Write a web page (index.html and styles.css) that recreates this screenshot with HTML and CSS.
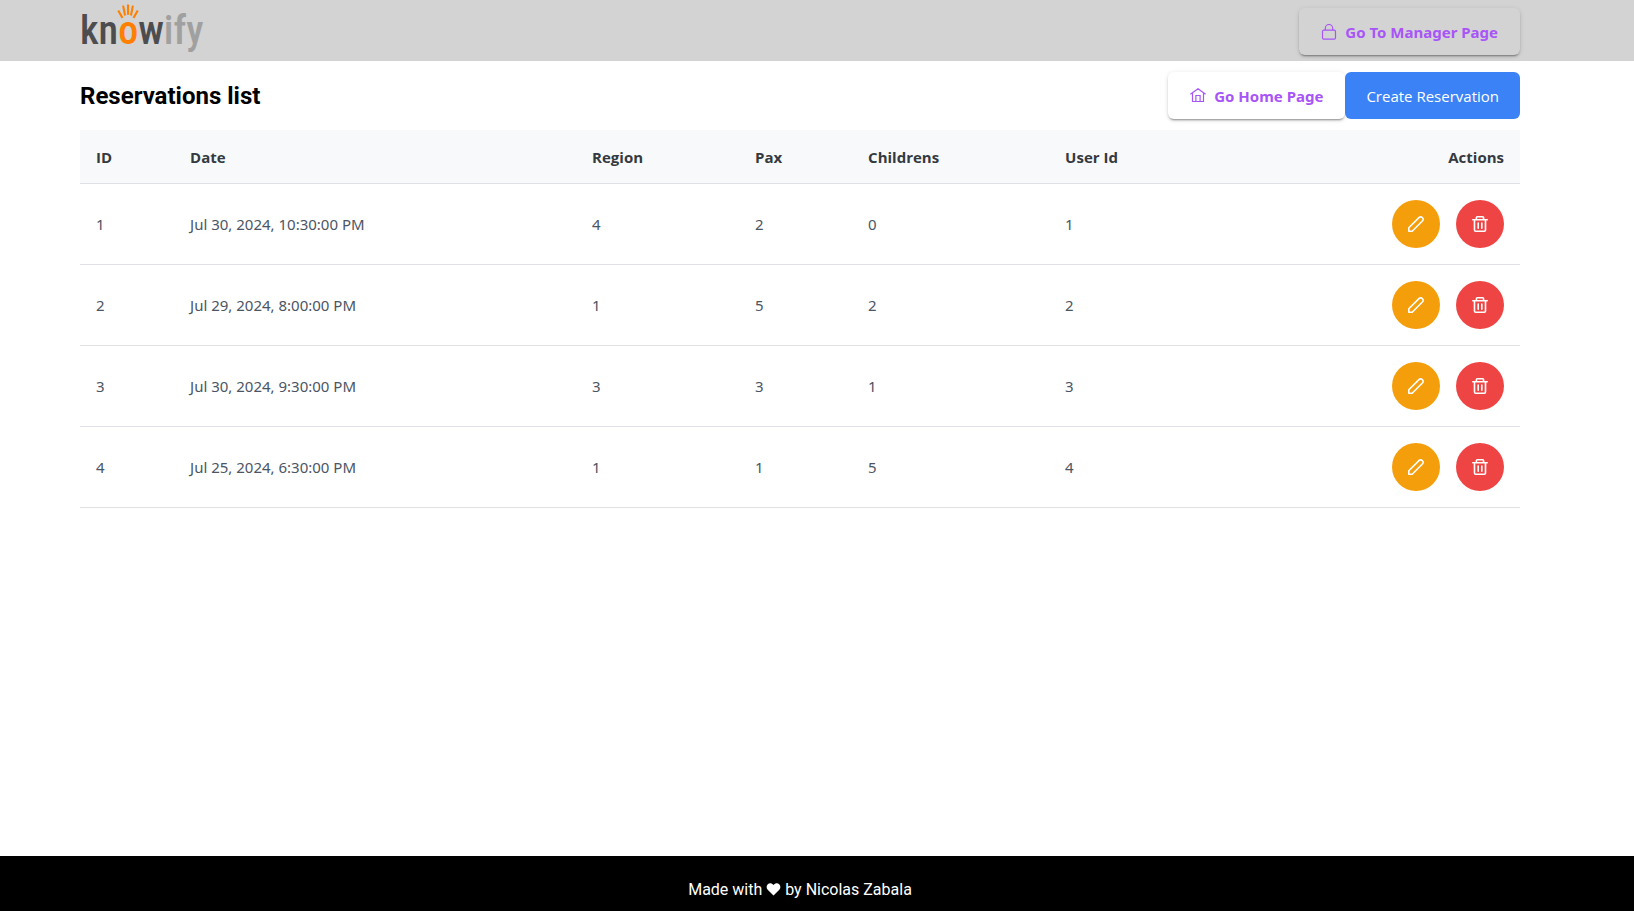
FILE: index.html
```html
<!DOCTYPE html>
<html lang="en">
<head>
<meta charset="utf-8">
<title>Reservations list</title>
<link rel="stylesheet" href="styles.css">
</head>
<body>
<svg class="sprite" aria-hidden="true">
  <symbol id="pencil" viewBox="0 0 16 16">
    <path d="M.8 15.200v-3.400L11.200 1.400q1.400-1.200 2.800 0l.6.6q1.200 1.400 0 2.800L4.200 15.200Z" fill="none" stroke="currentColor" stroke-width="1.600" stroke-linejoin="round"/>
  </symbol>
  <symbol id="trash" viewBox="0 0 16 16">
    <path d="M.8 3.700h14.400M4.400 3.700V1.700q0-.9.9-.9h5.400q.9 0 .9.9v2M2.500 3.700v10.400q0 1.100 1.100 1.100h8.800q1.100 0 1.100-1.100V3.700M6.200 7v5.200M9.800 7v5.200" fill="none" stroke="currentColor" stroke-width="1.600" stroke-linecap="round" stroke-linejoin="round"/>
  </symbol>
</svg>
<header class="topbar">
  <div class="container topbar-row">
    <a class="logo" href="#" aria-label="knowify">
      <span class="logo-dark">kn</span><span class="logo-o">o<svg class="rays" viewBox="0 0 18 14" aria-hidden="true"><path d="M1 5l3.500 6M5 1l1.600 8M9 0v8.500M13 1l-1.600 8M17 5l-3.500 6" fill="none" stroke="currentColor" stroke-width="1.700"/></svg></span><span class="logo-dark">w</span><span class="logo-light">ify</span>
    </a>
    <button class="btn btn-raised" type="button">
      <svg class="icon" viewBox="0 0 16 16" aria-hidden="true"><rect x="1.500" y="6.200" width="13" height="9" rx="1.200" fill="none" stroke="currentColor" stroke-width="1.200"/><path d="M4.300 6.200V4.200a3.700 3.700 0 0 1 7.400 0v2" fill="none" stroke="currentColor" stroke-width="1.200"/></svg>
      Go To Manager Page
    </button>
  </div>
</header>
<main class="container content">
  <div class="title-row">
    <h1 class="title">Reservations list</h1>
    <div class="title-actions">
      <button class="btn btn-raised" type="button">
        <svg class="icon" viewBox="0 0 16 16" aria-hidden="true"><path d="M.4 6.300 8 .8l7.600 5.500M2.500 4.800v8.700h11V4.800M5.900 13.500v-6h4.200v6" fill="none" stroke="currentColor" stroke-width="1.200"/></svg>
        Go Home Page
      </button>
      <button class="btn btn-primary" type="button">Create Reservation</button>
    </div>
  </div>
  <table class="table">
    <colgroup><col class="c-id"><col class="c-date"><col class="c-region"><col class="c-pax"><col class="c-children"><col class="c-user"><col></colgroup>
    <thead>
      <tr><th>ID</th><th>Date</th><th>Region</th><th>Pax</th><th>Childrens</th><th>User Id</th><th class="right">Actions</th></tr>
    </thead>
    <tbody>
      <tr><td>1</td><td>Jul 30, 2024, 10:30:00 PM</td><td>4</td><td>2</td><td>0</td><td>1</td><td><div class="actions"><button class="round edit" type="button" aria-label="Edit"><svg class="icon"><use href="#pencil"/></svg></button><button class="round delete" type="button" aria-label="Delete"><svg class="icon"><use href="#trash"/></svg></button></div></td></tr>
      <tr><td>2</td><td>Jul 29, 2024, 8:00:00 PM</td><td>1</td><td>5</td><td>2</td><td>2</td><td><div class="actions"><button class="round edit" type="button" aria-label="Edit"><svg class="icon"><use href="#pencil"/></svg></button><button class="round delete" type="button" aria-label="Delete"><svg class="icon"><use href="#trash"/></svg></button></div></td></tr>
      <tr><td>3</td><td>Jul 30, 2024, 9:30:00 PM</td><td>3</td><td>3</td><td>1</td><td>3</td><td><div class="actions"><button class="round edit" type="button" aria-label="Edit"><svg class="icon"><use href="#pencil"/></svg></button><button class="round delete" type="button" aria-label="Delete"><svg class="icon"><use href="#trash"/></svg></button></div></td></tr>
      <tr><td>4</td><td>Jul 25, 2024, 6:30:00 PM</td><td>1</td><td>1</td><td>5</td><td>4</td><td><div class="actions"><button class="round edit" type="button" aria-label="Edit"><svg class="icon"><use href="#pencil"/></svg></button><button class="round delete" type="button" aria-label="Delete"><svg class="icon"><use href="#trash"/></svg></button></div></td></tr>
    </tbody>
  </table>
</main>
<footer class="footer">
  <p class="container credit">Made with <svg class="heart" viewBox="0 0 14 13" aria-hidden="true"><path d="M7 12.500 1.200 6.700C-.3 5.100-.2 2.600 1.300 1.200 2.900-.2 5.300 0 7 2 8.700 0 11.100-.2 12.700 1.200c1.500 1.400 1.600 3.900.1 5.500Z" fill="currentColor"/></svg> by Nicolas Zabala</p>
</footer>
</body>
</html>
```
FILE: styles.css
```css
* { box-sizing: border-box; }
body {
  margin: 0;
  min-height: 100vh;
  display: flex;
  flex-direction: column;
  background: #fff;
  font-family: "Open Sans", "Noto Sans", sans-serif;
  font-size: 15px;
}
.sprite { display: none; }
.container {
  width: 100%;
  max-width: 1600px;
  padding: 0 80px;
}
.topbar { background: #d3d3d3; }
.topbar-row {
  display: flex;
  justify-content: space-between;
  align-items: flex-start;
}
.topbar .btn { margin-top: 8px; }
.logo {
  display: flex;
  font: 500 40px/61px "Roboto Condensed", Lato, sans-serif;
  text-decoration: none;
}
.logo-dark { color: #4d4d4f; }
.logo-light { color: #a0a0a0; }
.logo-o { position: relative; color: #ff7f00; }
.rays {
  position: absolute;
  top: 3px;
  left: 50%;
  margin-left: -11px;
  width: 22px;
  height: 20px;
}
.icon { width: 16px; height: 16px; display: block; }
.btn {
  display: flex;
  align-items: center;
  gap: 8px;
  height: 47px;
  padding: 0 21px;
  border: 0;
  border-radius: 6px;
  font-family: inherit;
  font-size: 15px;
  cursor: pointer;
}
.btn-raised {
  padding: 0 22px;
  background: transparent;
  color: #a855f7;
  font-family: "Noto Sans", "Open Sans", sans-serif;
  font-weight: 700;
  box-shadow: 0 3px 1px -2px rgba(0, 0, 0, .2), 0 2px 2px rgba(0, 0, 0, .14), 0 1px 5px rgba(0, 0, 0, .12);
}
.title-actions .btn-raised { background: #fff; }
.btn-primary { background: #3b82f6; color: #fff; }
.content { flex: 1; }
.title-row {
  display: flex;
  justify-content: space-between;
  align-items: center;
  padding: 11px 0;
}
.title {
  margin: 0;
  font: 700 24px/28px Roboto, sans-serif;
  color: #000;
}
.title-actions { display: flex; }
.table {
  width: 100%;
  table-layout: fixed;
  border-collapse: separate;
  border-spacing: 0;
  color: #4b5563;
}
.c-id { width: 6.53%; }
.c-date { width: 27.92%; }
.c-region { width: 11.32%; }
.c-pax { width: 7.85%; }
.c-children { width: 13.68%; }
.c-user { width: 16%; }
.table th, .table td {
  padding: 16px;
  border-bottom: 1px solid #dfe1e6;
  text-align: left;
  line-height: 21px;
}
.table td { font-family: "Noto Sans", "Open Sans", sans-serif; }
.table th {
  padding-top: 17px;
  padding-bottom: 15px;
  background: #f8f9fb;
  color: #343a40;
  font-weight: 700;
}
.table th.right { text-align: right; }
.actions { display: flex; justify-content: flex-end; gap: 16px; }
.round {
  display: flex;
  align-items: center;
  justify-content: center;
  width: 48px;
  height: 48px;
  padding: 0;
  border: 0;
  border-radius: 50%;
  color: #fff;
  cursor: pointer;
}
.edit { background: #f59e0b; }
.delete { background: #ef4444; }
.footer { background: #000; color: #fff; }
.credit {
  margin: 0;
  padding-top: 24px;
  padding-bottom: 12px;
  text-align: center;
  font: 16px/19px Roboto, sans-serif;
}
.heart { width: 15px; height: 13px; vertical-align: -1px; }
```
